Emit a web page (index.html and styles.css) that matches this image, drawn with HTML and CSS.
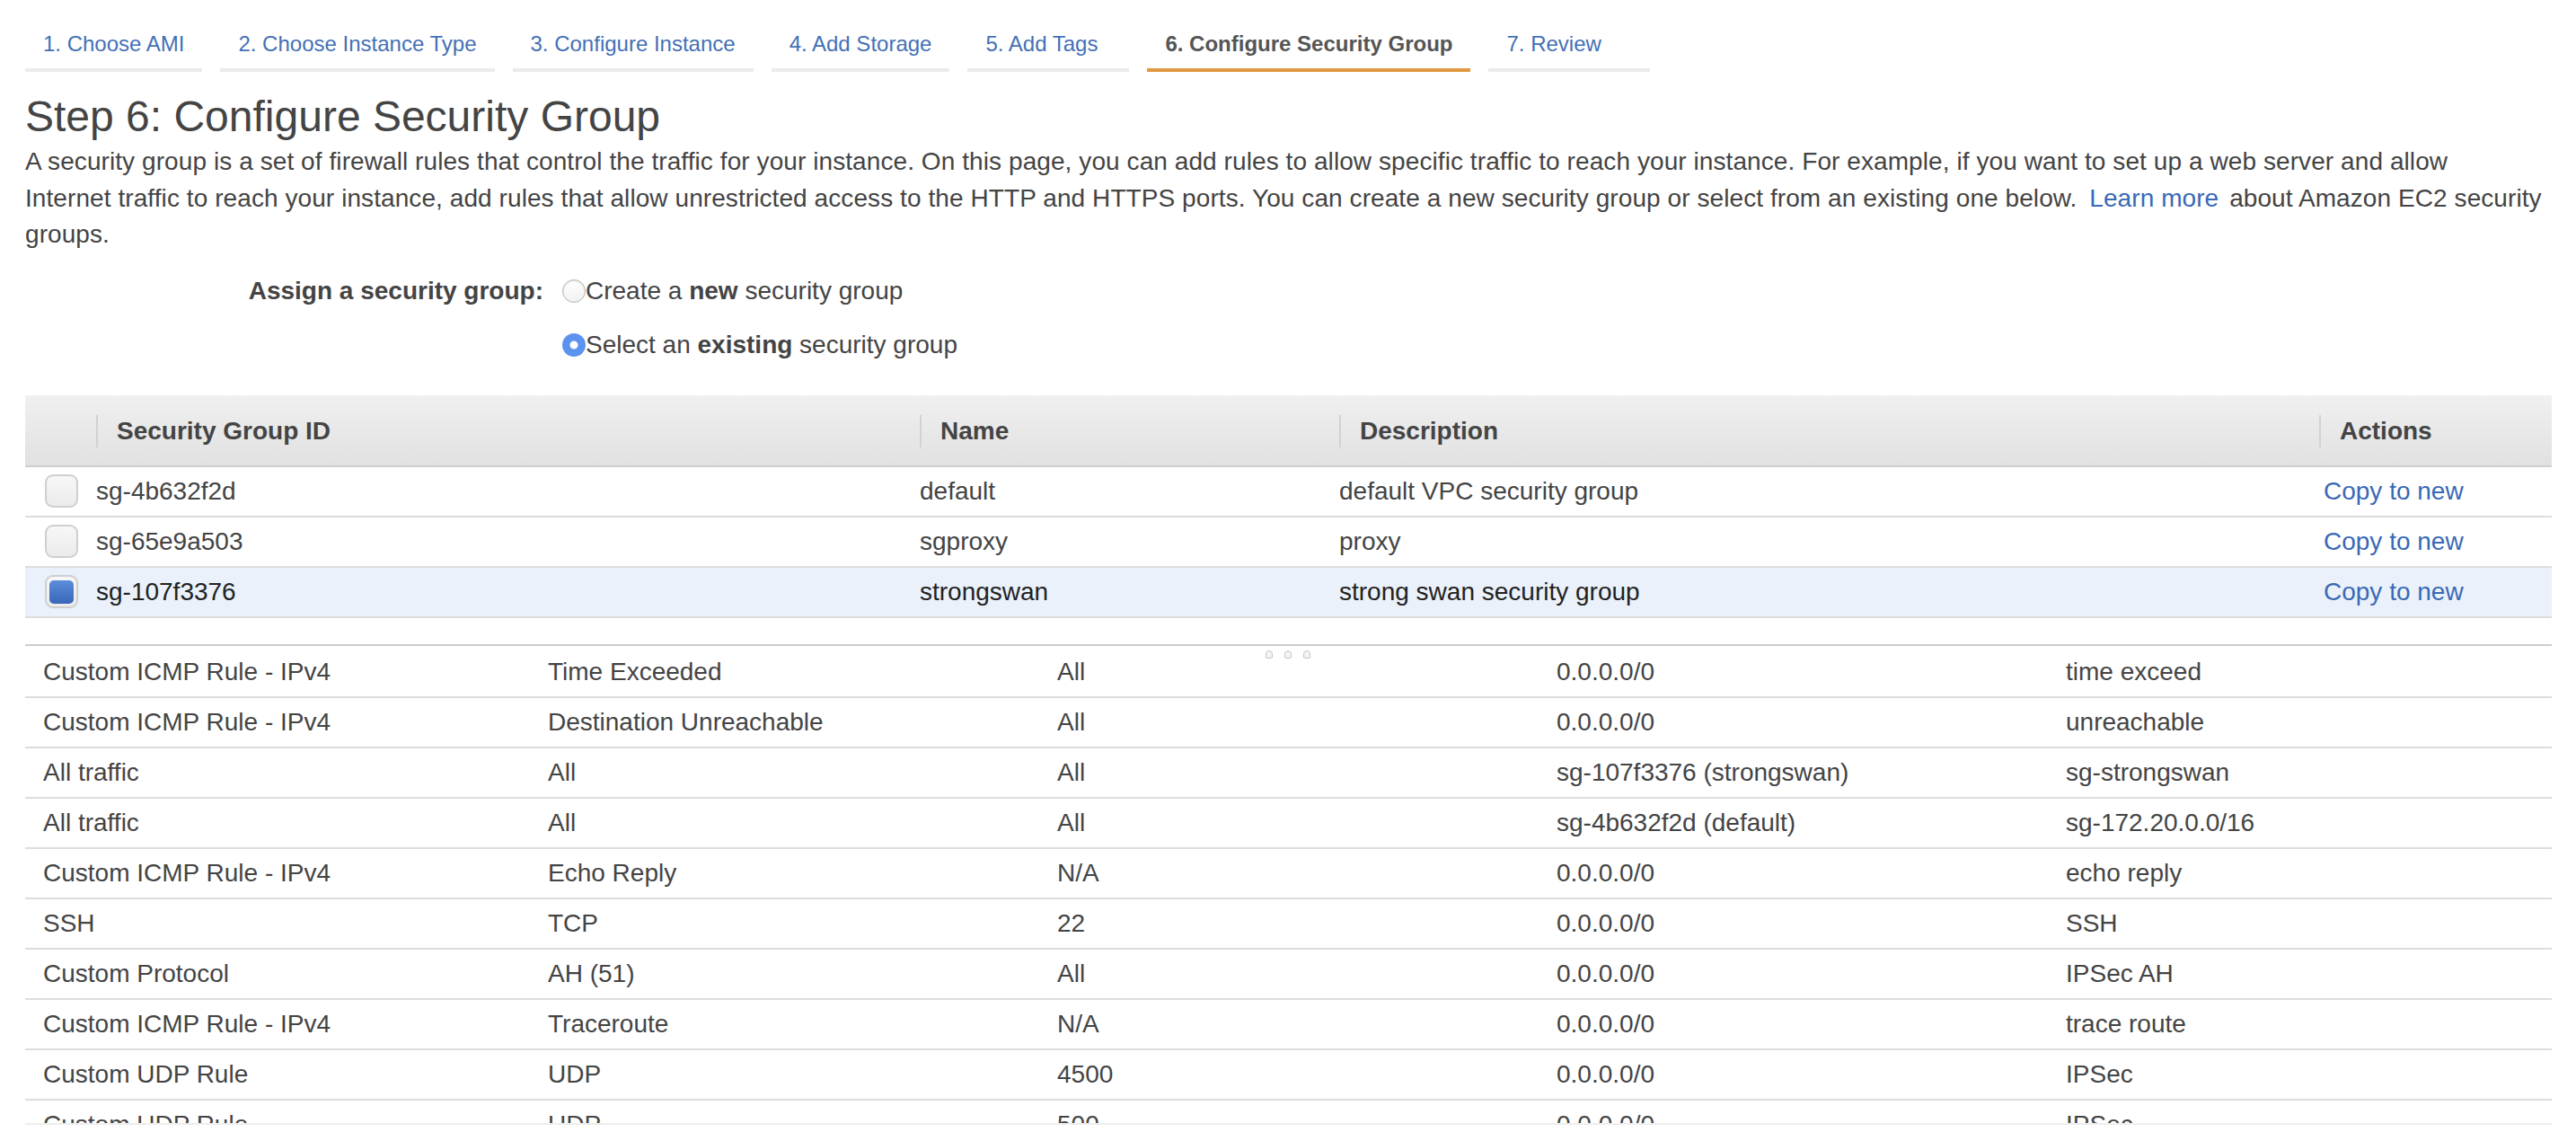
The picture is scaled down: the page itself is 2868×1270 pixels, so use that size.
FILE: index.html
```html
<!DOCTYPE html>
<html lang="en">
<head>
<meta charset="utf-8">
<title>Step 6: Configure Security Group</title>
<link rel="stylesheet" href="styles.css">
</head>
<body>
<div class="page">
  <nav class="tabs">
    <a class="tab">1. Choose AMI</a>
    <a class="tab">2. Choose Instance Type</a>
    <a class="tab">3. Configure Instance</a>
    <a class="tab">4. Add Storage</a>
    <a class="tab">5. Add Tags</a>
    <a class="tab active">6. Configure Security Group</a>
    <a class="tab">7. Review</a>
  </nav>

  <h1 class="title">Step 6: Configure Security Group</h1>
  <p class="intro">A security group is a set of firewall rules that control the traffic for your instance. On this page, you can add rules to allow specific traffic to reach your instance. For example, if you want to set up a web server and allow<br>Internet traffic to reach your instance, add rules that allow unrestricted access to the HTTP and HTTPS ports. You can create a new security group or select from an existing one below. <a class="link">Learn more</a> about Amazon EC2 security groups.</p>

  <div class="assign">
    <div class="assign-label">Assign a security group:</div>
    <div class="assign-options">
      <label class="option"><span class="radio"></span><span class="option-text">Create a <b>new</b> security group</span></label>
      <label class="option"><span class="radio checked"></span><span class="option-text">Select an <b>existing</b> security group</span></label>
    </div>
  </div>

  <div class="sg-table">
    <div class="sg-row sg-head">
      <div class="c-check"></div>
      <div class="c-id"><span class="hcell">Security Group ID</span></div>
      <div class="c-name"><span class="hcell">Name</span></div>
      <div class="c-desc"><span class="hcell">Description</span></div>
      <div class="c-act"><span class="hcell">Actions</span></div>
    </div>
    <div class="sg-row">
      <div class="c-check"><span class="checkbox"></span></div>
      <div class="c-id">sg-4b632f2d</div>
      <div class="c-name">default</div>
      <div class="c-desc">default VPC security group</div>
      <div class="c-act"><a class="link">Copy to new</a></div>
    </div>
    <div class="sg-row">
      <div class="c-check"><span class="checkbox"></span></div>
      <div class="c-id">sg-65e9a503</div>
      <div class="c-name">sgproxy</div>
      <div class="c-desc">proxy</div>
      <div class="c-act"><a class="link">Copy to new</a></div>
    </div>
    <div class="sg-row selected">
      <div class="c-check"><span class="checkbox checked"></span></div>
      <div class="c-id">sg-107f3376</div>
      <div class="c-name">strongswan</div>
      <div class="c-desc">strong swan security group</div>
      <div class="c-act"><a class="link">Copy to new</a></div>
    </div>
  </div>

  <div class="rules">
    <div class="handle"><span></span><span></span><span></span></div>
    <div class="rule"><div>Custom ICMP Rule - IPv4</div><div>Time Exceeded</div><div>All</div><div>0.0.0.0/0</div><div>time exceed</div></div>
    <div class="rule"><div>Custom ICMP Rule - IPv4</div><div>Destination Unreachable</div><div>All</div><div>0.0.0.0/0</div><div>unreachable</div></div>
    <div class="rule"><div>All traffic</div><div>All</div><div>All</div><div>sg-107f3376 (strongswan)</div><div>sg-strongswan</div></div>
    <div class="rule"><div>All traffic</div><div>All</div><div>All</div><div>sg-4b632f2d (default)</div><div>sg-172.20.0.0/16</div></div>
    <div class="rule"><div>Custom ICMP Rule - IPv4</div><div>Echo Reply</div><div>N/A</div><div>0.0.0.0/0</div><div>echo reply</div></div>
    <div class="rule"><div>SSH</div><div>TCP</div><div>22</div><div>0.0.0.0/0</div><div>SSH</div></div>
    <div class="rule"><div>Custom Protocol</div><div>AH (51)</div><div>All</div><div>0.0.0.0/0</div><div>IPSec AH</div></div>
    <div class="rule"><div>Custom ICMP Rule - IPv4</div><div>Traceroute</div><div>N/A</div><div>0.0.0.0/0</div><div>trace route</div></div>
    <div class="rule"><div>Custom UDP Rule</div><div>UDP</div><div>4500</div><div>0.0.0.0/0</div><div>IPSec</div></div>
    <div class="rule"><div>Custom UDP Rule</div><div>UDP</div><div>500</div><div>0.0.0.0/0</div><div>IPSec</div></div>
  </div>
</div>
</body>
</html>
```

FILE: styles.css
```css
html, body {
  margin: 0;
  padding: 0;
  background: #ffffff;
}
body {
  font-family: "Liberation Sans", Arial, Helvetica, sans-serif;
  color: #444444;
  font-size: 28px;
}
.page {
  padding: 0 27px 0 28px;
}

/* Wizard tabs */
.tabs {
  display: flex;
  gap: 20px;
}
.tab {
  box-sizing: border-box;
  min-width: 180px;
  padding: 34px 20px 12px;
  font-size: 24px;
  line-height: 30px;
  color: #4470b5;
  border-bottom: 4px solid #ebebeb;
  white-space: nowrap;
}
.tab.active {
  color: #555555;
  font-weight: bold;
  border-bottom-color: #e0993f;
}

/* Heading and intro */
.title {
  margin: 22px 0 0;
  font-size: 48px;
  line-height: 56px;
  font-weight: normal;
  color: #444444;
}
.intro {
  margin: 2px 0 0;
  width: 2812px;
  font-size: 28px;
  line-height: 40.5px;
  letter-spacing: 0.08px;
}
.link {
  color: #3a69b5;
  text-decoration: none;
}
.intro .link {
  margin: 0 4px 0 6px;
}

/* Assign row */
.assign {
  display: flex;
  margin-top: 22px;
}
.assign-label {
  width: 577px;
  text-align: right;
  font-weight: bold;
  line-height: 40px;
}
.assign-options {
  margin-left: 21px;
  display: flex;
  flex-direction: column;
  gap: 20px;
}
.option {
  display: flex;
  align-items: center;
  line-height: 40px;
  white-space: nowrap;
}
.radio {
  box-sizing: border-box;
  width: 26px;
  height: 26px;
  border-radius: 50%;
  border: 1px solid #b5b5b5;
  background: linear-gradient(#ffffff, #f1f1f1);
  box-shadow: inset 0 1px 2px rgba(0,0,0,0.12);
}
.radio.checked {
  border: none;
  background: radial-gradient(circle, #ffffff 0 4px, #5b93ee 5px);
  box-shadow: none;
}

/* Security group table */
.sg-table {
  margin-top: 36px;
}
.sg-row {
  display: grid;
  grid-template-columns: 79px 917px 467px 1091px 1fr;
  align-items: center;
  padding: 7px 0;
  border-bottom: 2px solid #dddddd;
  line-height: 40px;
  white-space: nowrap;
}
.sg-row.selected {
  background: #eaf1fb;
  color: #222222;
}
.sg-head {
  padding: 22px 0 20px;
  background: linear-gradient(#f0f0f0, #e1e1e1);
  border-bottom: 2px solid #cfcfcf;
  font-weight: bold;
}
.hcell {
  display: block;
  line-height: 36px;
  border-left: 2px solid #d2d2d2;
  padding-left: 21px;
}
.c-act .link {
  padding-left: 5px;
}
.c-check {
  display: flex;
  padding-left: 22px;
}
.checkbox {
  box-sizing: border-box;
  width: 37px;
  height: 37px;
  border: 2px solid #cfcfcf;
  border-radius: 9px;
  background: linear-gradient(#f7f7f7, #ebebeb);
  display: flex;
  align-items: center;
  justify-content: center;
}
.checkbox.checked::after {
  content: "";
  width: 27px;
  height: 26px;
  border-radius: 5px;
  background: linear-gradient(#5c8ddb, #3a66b8);
}

/* Rules table */
.rules {
  position: relative;
  margin-top: 29px;
  height: 529px;
  overflow: hidden;
  border-top: 2px solid #cccccc;
  border-bottom: 2px solid #eeeeee;
  padding-top: 2px;
  box-sizing: content-box;
}
.rule {
  display: grid;
  grid-template-columns: 562px 567px 556px 567px 1fr;
  padding: 7px 0 7px 20px;
  border-bottom: 2px solid #dddddd;
  line-height: 40px;
  white-space: nowrap;
}
.handle {
  position: absolute;
  left: 1381px;
  top: 5px;
  display: flex;
  gap: 13px;
}
.handle span {
  box-sizing: border-box;
  width: 8px;
  height: 9px;
  border: 1px solid #c4c4c4;
  border-radius: 4px 4px 2px 2px;
  background: #f4f4f4;
}
```
